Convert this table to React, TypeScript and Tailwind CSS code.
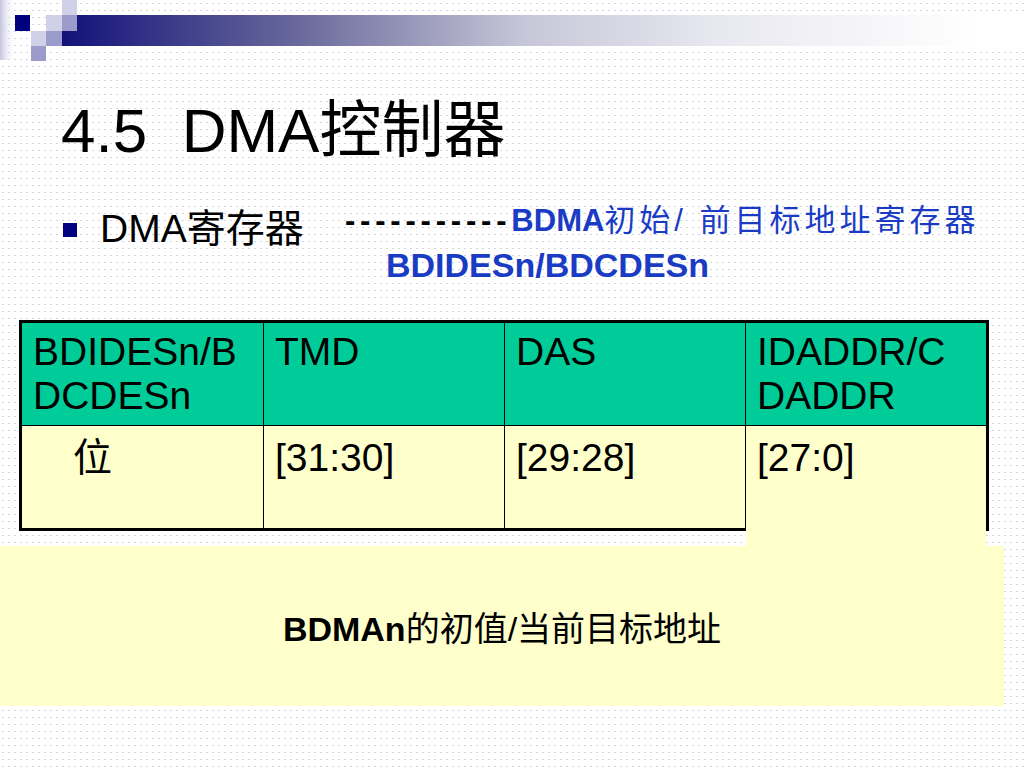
import React from "react";

const FONT = "font-['Liberation_Sans','Noto_Sans_CJK_SC',sans-serif]";

function Logo() {
  return (
    <svg width="1024" height="61" viewBox="0 0 1024 61" className="block">
      <defs>
        <linearGradient id="bar" x1="62" y1="0" x2="1024" y2="0" gradientUnits="userSpaceOnUse">
          <stop offset="0" stopColor="#12127a" />
          <stop offset="0.25" stopColor="#6b6b9d" />
          <stop offset="0.48" stopColor="#c6c6d8" />
          <stop offset="0.68" stopColor="#e8e8f0" />
          <stop offset="0.95" stopColor="#ffffff" />
        </linearGradient>
        <linearGradient id="fade" x1="0" y1="0" x2="16" y2="0" gradientUnits="userSpaceOnUse">
          <stop offset="0" stopColor="#c4c4de" />
          <stop offset="1" stopColor="#ffffff" stopOpacity="0" />
        </linearGradient>
      </defs>
      <rect x="0" y="0" width="16" height="60" fill="url(#fade)" />
      <rect x="62" y="15" width="962" height="31" fill="url(#bar)" />
      <rect x="62" y="0" width="15" height="15" fill="#d0d0e8" />
      <rect x="15" y="15" width="15" height="16" fill="#00007e" />
      <rect x="46" y="15" width="16" height="16" fill="#d0d0e8" />
      <rect x="62" y="15" width="15" height="16" fill="#9c9ccc" />
      <rect x="31" y="31" width="15" height="15" fill="#d0d0e8" />
      <rect x="46" y="31" width="16" height="15" fill="#9c9ccc" />
      <rect x="31" y="46" width="15" height="15" fill="#9c9ccc" />
    </svg>
  );
}

export default function App() {
  const header = ["BDIDESn/BDCDESn", "TMD", "DAS", "IDADDR/CDADDR"];
  const body = ["位", "[31:30]", "[29:28]", "[27:0]"];
  return (
    <div
      className={`${FONT} relative w-[1024px] h-[768px] overflow-hidden bg-white bg-[radial-gradient(circle,#d4d4e0_0.8px,transparent_1.1px)] bg-[length:6px_7px] text-black`}
    >
      <Logo />

      <div className="mt-[40px] pl-[61px] h-[60px] leading-[60px] text-[62px] whitespace-pre">
        {"4.5  DMA控制器"}
      </div>

      <div className="mt-[40px] flex h-[100px]">
        <div className="w-[345px] shrink-0 pl-[63px] flex items-start">
          <div className="mt-[22px] w-[14px] h-[14px] bg-[#000080]" />
          <div className="ml-[23px] mt-[6px] text-[39px] leading-[44px]">DMA寄存器</div>
        </div>
        <div className="text-[#1a3cc4] text-[31px] leading-[40px]">
          <div className="whitespace-nowrap">
            <span className="text-black font-bold tracking-[4.8px]">-----------</span>
            <span className="font-bold">BDMA</span>
            <span className="tracking-[4px]">初始/ 前目标地址寄存器</span>
          </div>
          <div className="ml-[41px] mt-[4px] font-bold text-[34px]">BDIDESn/BDCDESn</div>
        </div>
      </div>

      <div className="mt-[19px] ml-[19px] w-[970px] border-[3px] border-black grid grid-cols-4">
        {header.map((h, i) => (
          <div
            key={h}
            className={`h-[103px] bg-[#00cc99] pl-[11px] pr-[18px] pt-[7px] text-[39px] leading-[44px] break-all ${
              i > 0 ? "border-l border-black" : ""
            } border-b border-black`}
          >
            {h}
          </div>
        ))}
        {body.map((b, i) => (
          <div
            key={b}
            className={`h-[102px] bg-[#ffffcc] pl-[11px] pt-[10px] text-[39px] leading-[44px] ${
              i > 0 ? "border-l border-black" : ""
            }`}
          >
            {i === 0 ? <span className="ml-[40px]">{b}</span> : b}
          </div>
        ))}
      </div>

      <div className="relative mt-[15px] w-[1004px] h-[160px] bg-[#ffffcc] flex items-center justify-center">
        <div className="absolute left-[746px] top-[-41px] w-[240px] h-[42px] bg-[#ffffcc]" />
        <div className="text-[34px] leading-[40px] pt-[6px]">
          <span className="font-bold">BDMAn</span>
          <span>的初值/当前目标地址</span>
        </div>
      </div>
    </div>
  );
}
